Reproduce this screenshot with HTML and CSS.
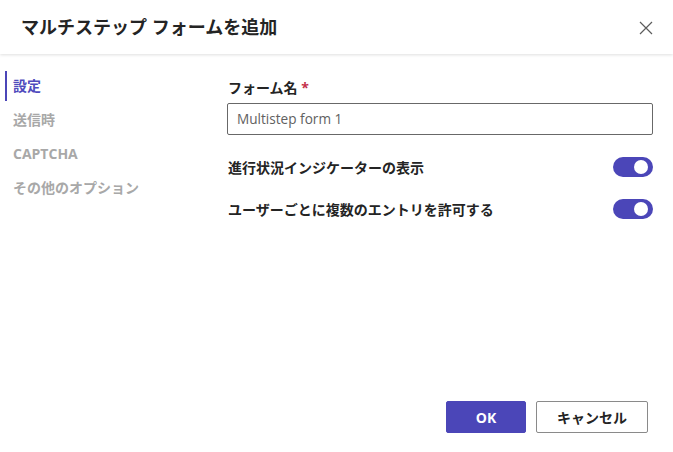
FILE: index.html
```html
<!DOCTYPE html>
<html lang="ja">
<head>
    <meta charset="UTF-8">
    <title>マルチステップ フォームを追加</title>
    <link rel="stylesheet" href="styles.css">
</head>
<body>

<div class="dialog">
    <div class="dialog-header">
        <h1 class="dialog-title">マルチステップ フォームを追加</h1>
        <button class="close-btn" aria-label="閉じる">
            <svg width="14" height="14" viewBox="0 0 14 14">
                <path d="M1 1 L13 13 M13 1 L1 13" stroke="#5c5c5c" stroke-width="1.2" fill="none"/>
            </svg>
        </button>
    </div>

    <div class="dialog-body">
        <ul class="side-nav">
            <li class="nav-item active">設定</li>
            <li class="nav-item">送信時</li>
            <li class="nav-item">CAPTCHA</li>
            <li class="nav-item">その他のオプション</li>
        </ul>

        <div class="form-pane">
            <label class="field-label">フォーム名 <span class="required">*</span></label>
            <div class="text-input">Multistep form 1</div>

            <div class="toggle-row">
                <span>進行状況インジケーターの表示</span>
                <span class="toggle on"><i></i></span>
            </div>
            <div class="toggle-row">
                <span>ユーザーごとに複数のエントリを許可する</span>
                <span class="toggle on"><i></i></span>
            </div>
        </div>
    </div>

    <div class="dialog-footer">
        <button class="btn btn-primary">OK</button>
        <button class="btn btn-default">キャンセル</button>
    </div>
</div>

</body>
</html>
```

FILE: styles.css
```css
html, body{
    margin: 0;
    padding: 0;
    background: #fff;
}
body{
    font-family: "Open Sans", "Noto Sans CJK JP", sans-serif;
    color: #242424;
    font-size: 14px;
}
.dialog{
    width: 673px;
    height: 452px;
    display: flex;
    flex-direction: column;
}

/* header */
.dialog-header{
    height: 54px;
    display: flex;
    align-items: center;
    justify-content: space-between;
    padding: 0 19px 0 21px;
    box-sizing: border-box;
    box-shadow: 0 1px 3px rgba(0, 0, 0, 0.13);
    position: relative;
}
.dialog-title{
    margin: 0;
    font-size: 18px;
    font-weight: 700;
    line-height: 26px;
}
.close-btn{
    border: 0;
    background: none;
    padding: 0;
    width: 16px;
    height: 16px;
    display: flex;
    align-items: center;
    justify-content: center;
    margin-top: 1px;
}

/* body */
.dialog-body{
    flex: 1;
    display: flex;
}
.side-nav{
    list-style: none;
    margin: 0;
    padding: 17px 0 0 5px;
    width: 222px;
}
.nav-item{
    height: 30px;
    line-height: 30px;
    margin-bottom: 4px;
    padding-left: 8px;
    border-left: 2px solid transparent;
    font-weight: 700;
    color: #a8a8a8;
    font-size: 14px;
    position: relative;
    left: -2px;
}
.nav-item.active{
    left: 0;
    color: #4f4bbd;
    border-left-color: #4b46b8;
    padding-left: 6px;
}
.form-pane{
    flex: 1;
    padding: 24px 20px 0 0;
}
.field-label{
    display: block;
    font-weight: 700;
    line-height: 20px;
    margin: 0 0 5px 1px;
}
.required{
    color: #c4314b;
}
.text-input{
    height: 32px;
    box-sizing: border-box;
    border: 1px solid #686868;
    border-radius: 2px;
    padding: 0 9px;
    line-height: 30px;
    color: #616161;
    font-size: 13.6px;
}
.toggle-row{
    display: flex;
    align-items: center;
    justify-content: space-between;
    height: 20px;
    margin-top: 22px;
    font-weight: 700;
    padding-left: 1px;
}
.toggle{
    width: 40px;
    height: 20px;
    border-radius: 10px;
    background: #4b46b8;
    position: relative;
}
.toggle i{
    position: absolute;
    width: 14px;
    height: 14px;
    border-radius: 50%;
    background: #fff;
    top: 3px;
    right: 5px;
}

/* footer */
.dialog-footer{
    display: flex;
    justify-content: flex-end;
    gap: 10px;
    padding: 0 25px 19px 0;
}
.btn{
    height: 32px;
    min-width: 80px;
    box-sizing: border-box;
    border-radius: 2px;
    font-family: inherit;
    font-size: 14px;
    font-weight: 700;
    padding: 0 20px;
}
.btn-primary{
    background: #4b46b8;
    border: 1px solid #4b46b8;
    color: #fff;
}
.btn-default{
    background: #fff;
    border: 1px solid #8a8a8a;
    color: #242424;
    width: 112px;
}
```
